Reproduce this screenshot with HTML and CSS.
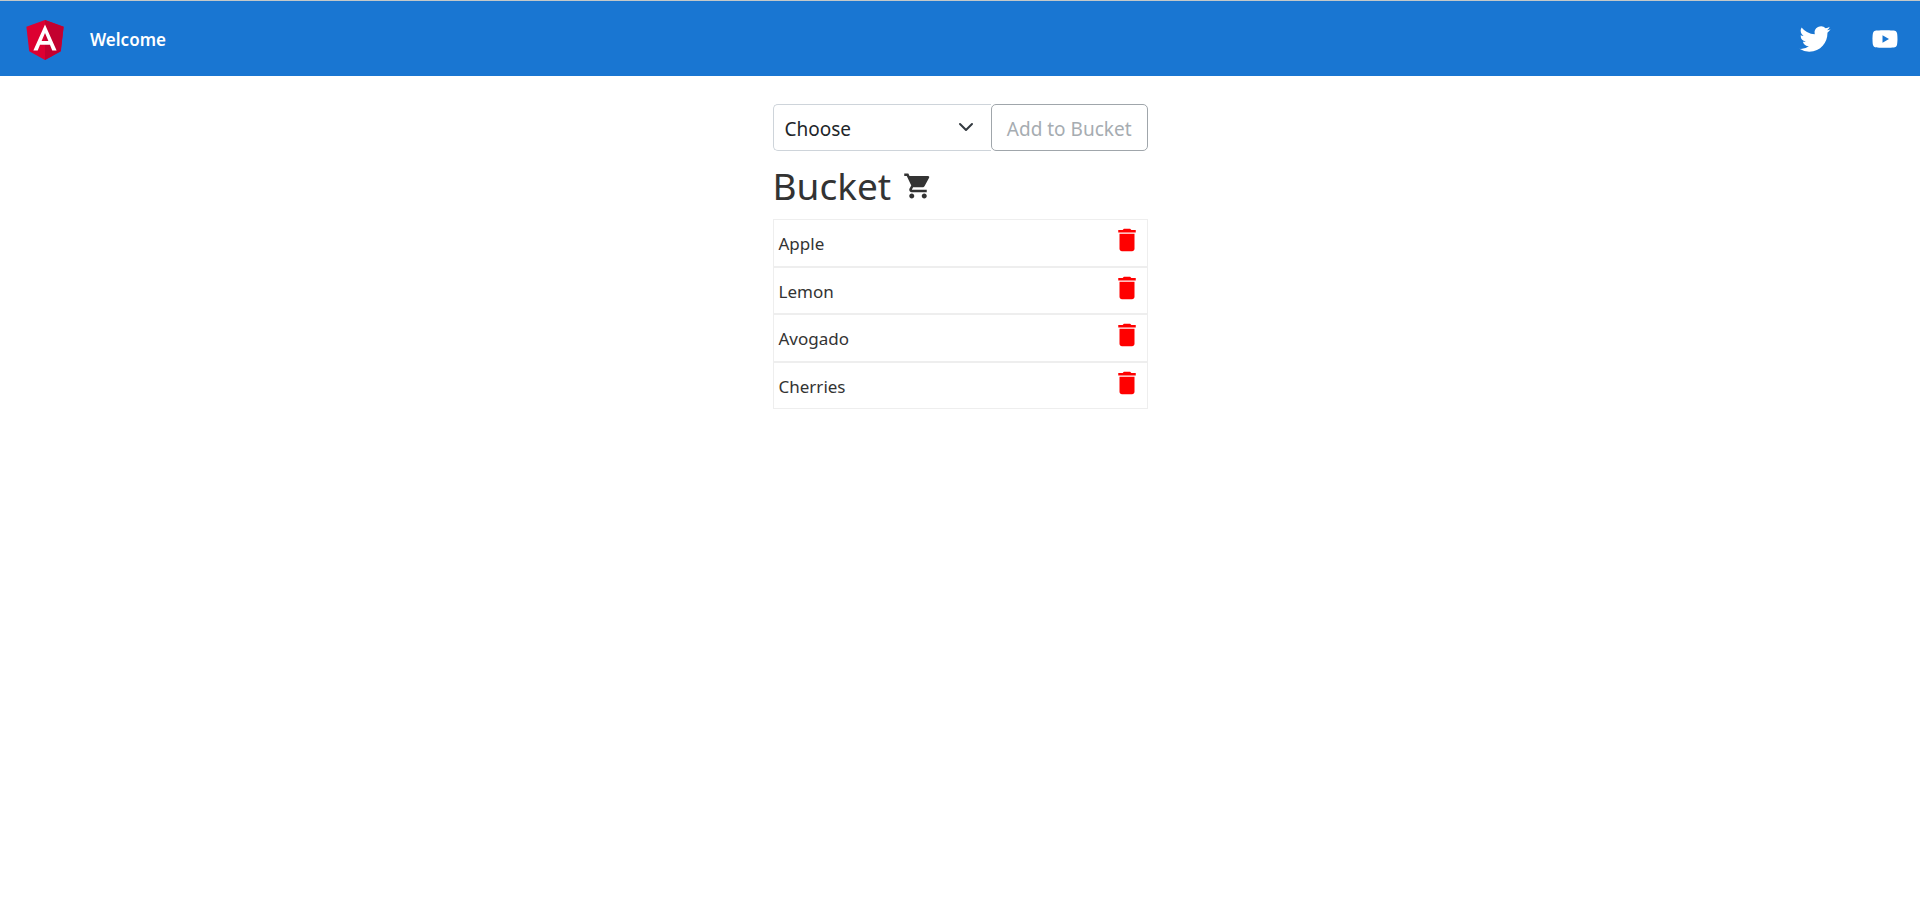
FILE: index.html
```html
<!DOCTYPE html>
<html lang="en">
<head>
<meta charset="utf-8">
<meta name="viewport" content="width=device-width, initial-scale=1">
<title>Bucket</title>
<link rel="stylesheet" href="styles.css">
</head>
<body>
<svg class="sprite" aria-hidden="true">
  <symbol id="trash" viewBox="0 0 24 24"><path d="M6 19c0 1.100.9 2 2 2h8c1.100 0 2-.9 2-2V7H6v12zM19 4h-3.500l-1-1h-5l-1 1H5v2h14V4z"/></symbol>
</svg>
<header class="toolbar">
  <svg class="logo" viewBox="0 0 250 250" role="img" aria-label="Angular Logo">
    <path fill="#dd0031" d="M125 30L31.900 63.200l14.200 123.100L125 230l78.900-43.700 14.200-123.100z"/>
    <path fill="#c3002f" d="M125 30v200l78.900-43.700 14.200-123.100z"/>
    <path fill="#fff" d="M125 52.100L66.800 182.600h21.700l11.700-29.200h49.400l11.700 29.200H183L125 52.100zm17 83.300h-34l17-40.900z"/>
  </svg>
  <span class="welcome">Welcome</span>
  <nav class="social">
    <a class="twitter" href="#" aria-label="Twitter">
      <svg viewBox="0 0 400 400"><path d="M153.620 301.590c94.340 0 145.940-78.160 145.940-145.940 0-2.220 0-4.430-.15-6.630A104.360 104.360 0 0 0 325 122.470a102.380 102.380 0 0 1-29.460 8.070 51.470 51.470 0 0 0 22.550-28.370 102.790 102.790 0 0 1-32.570 12.450 51.340 51.340 0 0 0-87.410 46.780A145.620 145.620 0 0 1 92.400 107.810a51.330 51.330 0 0 0 15.880 68.470A50.910 50.910 0 0 1 85 169.860v.65a51.310 51.310 0 0 0 41.150 50.280 51.210 51.210 0 0 1-23.160.88 51.350 51.350 0 0 0 47.920 35.620 102.920 102.920 0 0 1-63.700 22A104.410 104.410 0 0 1 75 278.550a145.210 145.210 0 0 0 78.620 23"/></svg>
    </a>
    <a class="youtube" href="#" aria-label="YouTube">
      <svg viewBox="0 0 24 24"><path d="M21.580 7.190c-.23-.86-.91-1.540-1.770-1.770C18.250 5 12 5 12 5s-6.250 0-7.810.42c-.86.23-1.540.91-1.770 1.770C2 8.750 2 12 2 12s0 3.250.42 4.810c.23.86.91 1.540 1.770 1.770C5.750 19 12 19 12 19s6.250 0 7.810-.42c.86-.23 1.540-.91 1.770-1.770C22 15.250 22 12 22 12s0-3.250-.42-4.810zM10 15V9l5.200 3-5.200 3z"/></svg>
    </a>
  </nav>
</header>
<main class="content">
  <form class="picker">
    <select class="choice" aria-label="Choose an item">
      <option>Choose</option>
      <option>Apple</option>
      <option>Lemon</option>
      <option>Avogado</option>
      <option>Cherries</option>
    </select>
    <svg class="chevron" viewBox="0 0 16 16" aria-hidden="true"><path d="M2 5l6 6 6-6"/></svg>
    <button class="add" type="button" disabled>Add to Bucket</button>
  </form>
  <h1 class="title">Bucket
    <svg class="cart" viewBox="0 0 24 24" aria-hidden="true"><path d="M7 18c-1.100 0-1.990.9-1.990 2S5.900 22 7 22s2-.9 2-2-.9-2-2-2zM1 2v2h2l3.600 7.590-1.350 2.450c-.16.280-.25.610-.25.960 0 1.100.9 2 2 2h12v-2H7.420c-.14 0-.25-.11-.25-.25l.03-.12.900-1.630h7.450c.75 0 1.410-.41 1.750-1.030l3.580-6.490A1 1 0 0 0 20 4H5.210l-.94-2H1zm16 16c-1.100 0-1.990.9-1.990 2s.89 2 1.990 2 2-.9 2-2-.9-2-2-2z"/></svg>
  </h1>
  <ul class="list">
    <li class="item"><span class="name">Apple</span><button class="remove" type="button" aria-label="Remove Apple"><svg><use href="#trash"/></svg></button></li>
    <li class="item"><span class="name">Lemon</span><button class="remove" type="button" aria-label="Remove Lemon"><svg><use href="#trash"/></svg></button></li>
    <li class="item"><span class="name">Avogado</span><button class="remove" type="button" aria-label="Remove Avogado"><svg><use href="#trash"/></svg></button></li>
    <li class="item"><span class="name">Cherries</span><button class="remove" type="button" aria-label="Remove Cherries"><svg><use href="#trash"/></svg></button></li>
  </ul>
</main>
</body>
</html>
```

FILE: styles.css
```css
* {
  box-sizing: border-box;
}

body {
  margin: 0;
  background: #fff;
  color: #333;
  font-family: "Segoe UI", "Noto Sans", sans-serif;
  font-size: 17px;
  line-height: 24px;
}

svg {
  display: block;
}

.sprite {
  display: none;
}

.toolbar {
  display: flex;
  align-items: center;
  height: 76px;
  border-top: 1px solid #c4c8c8;
  background: #1976d2;
  color: #fff;
}

.logo {
  width: 50px;
  height: 50px;
  margin: 0 20px;
}

.welcome {
  padding-top: 2px;
  font-weight: 600;
}

.social {
  display: flex;
  align-items: center;
  margin-left: auto;
  fill: #fff;
}

.twitter {
  margin: 0 10px;
}

.twitter svg {
  width: 50px;
  height: 50px;
}

.youtube {
  margin: 0 20px;
}

.youtube svg {
  width: 30px;
  height: 30px;
}

.content {
  width: 100%;
  max-width: 375px;
  margin: 28px auto 0;
}

.picker {
  display: flex;
  position: relative;
}

.choice {
  flex: 1;
  min-width: 0;
  padding: 9px 11px 6px;
  appearance: none;
  border: 1px solid #ced4da;
  border-right: 0;
  border-radius: 5px 0 0 5px;
  background: #fff;
  color: #212529;
  font: inherit;
  font-size: 19px;
  line-height: 30px;
}

.chevron {
  position: absolute;
  top: 15px;
  right: 174px;
  width: 16px;
  height: 16px;
  fill: none;
  stroke: #343a40;
  stroke-width: 2;
  stroke-linecap: round;
  stroke-linejoin: round;
  pointer-events: none;
}

.add {
  padding: 9px 15px 6px;
  border: 1px solid #a0a6ab;
  border-radius: 5px;
  background: #fff;
  color: #a6acb1;
  font: inherit;
  font-size: 19px;
  line-height: 30px;
}

.title {
  display: flex;
  align-items: center;
  gap: 12px;
  margin: 11px 0 9px;
  font-size: 37px;
  font-weight: 400;
  line-height: 48px;
}

.cart {
  width: 30px;
  height: 30px;
  fill: #333;
}

.list {
  display: grid;
  grid-auto-rows: 1fr;
  min-height: 190px;
  margin: 0;
  padding: 0;
  list-style: none;
}

.item {
  display: flex;
  align-items: flex-start;
  justify-content: space-between;
  padding: 5px;
  border: 1px solid #eee;
}

.name {
  padding-top: 7px;
}

.remove {
  padding: 0;
  border: 0;
  background: none;
  fill: red;
  cursor: pointer;
}

.remove svg {
  width: 30px;
  height: 30px;
}
```
